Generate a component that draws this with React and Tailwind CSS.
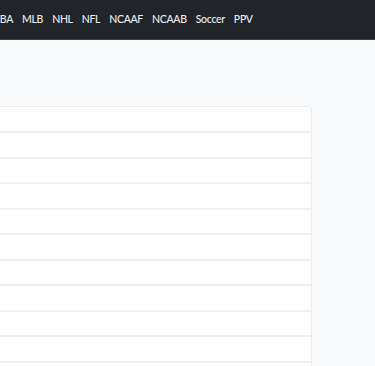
import React from 'react';

const App = () => {
  const leagues = ['NBA', 'MLB', 'NHL', 'NFL', 'NCAAF', 'NCAAB', 'Soccer', 'PPV'];
  const rows = Array.from({ length: 10 });

  return (
    <div className="min-h-screen bg-[#f8f9fa] overflow-hidden" style={{ fontFamily: 'Lato, "Noto Sans", sans-serif' }}>
      {/* Top nav */}
      <nav className="h-10 bg-[#212529] border-b border-[#3a3f44] flex items-center">
        <ul className="flex items-center gap-[9px] ml-[-8px] text-[10.5px] tracking-[-0.3px] font-medium text-[#e9ecef]">
          {leagues.map((l) => (
            <li key={l} className="whitespace-nowrap">{l}</li>
          ))}
        </ul>
      </nav>

      {/* Table card */}
      <div className="pt-[66px]">
        <div className="ml-[-20px] w-[332px] bg-white border border-[#ececec] rounded-tr-[4px]">
          <div className="h-[26.2px] border-b-2 border-[#f0f0f0]" />
          {rows.map((_, i) => (
            <div key={i} className="h-[25.5px] border-b-2 border-[#f0f0f0]" />
          ))}
        </div>
      </div>
    </div>
  );
};

export default App;
